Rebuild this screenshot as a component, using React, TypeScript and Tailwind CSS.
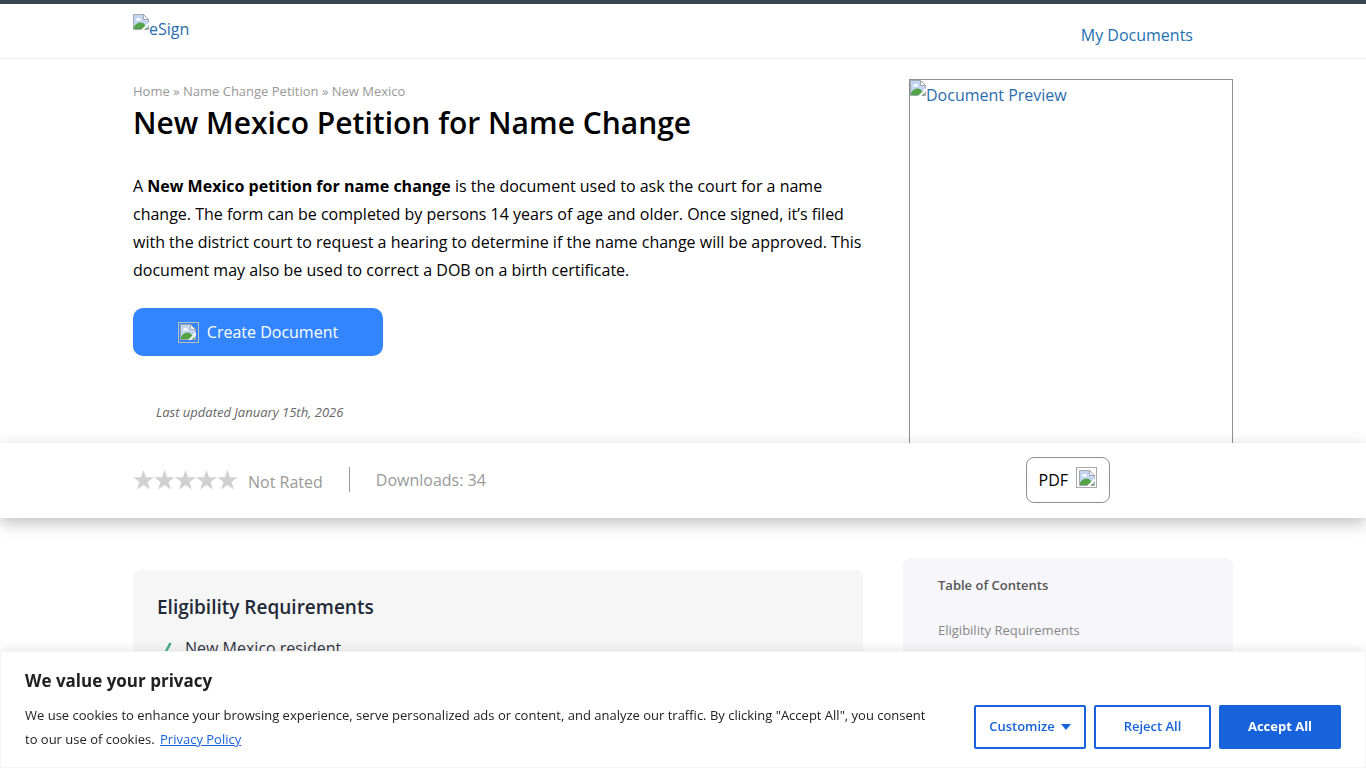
const ELIGIBILITY = ['New Mexico resident']

const CONTENTS = [{ label: 'Eligibility Requirements', href: '#eligibility' }]

const BREADCRUMBS = [
  { label: 'Home', href: '#home' },
  { label: 'Name Change Petition', href: '#name-change' },
]

function ImageIcon() {
  return (
    <svg viewBox="0 0 16 16" className="size-4 shrink-0" aria-hidden="true">
      <path d="M0.5 0.5H11L15.5 5V15.5H0.5Z" fill="#c3d5f1" />
      <path d="M3 6.5a1.2 1.2 0 0 1 1-1.8a1.8 1.8 0 0 1 3.2 0a1.2 1.2 0 0 1 .8 1.8Z" fill="#fff" />
      <path d="M1 15V12.5C3 10 5 8.5 7.5 8.5C9.5 8.5 11 9.5 12.5 11.5L15 15Z" fill="#55a347" />
      <path d="M10.5 0.5V5.5H15.5Z" fill="#fff" />
      <path d="M0.5 15.5V0.5H10.5L15.5 5.5V15.5Z" fill="none" stroke="#a0a7b0" />
      <path d="M10.5 0.5V5.5H15.5" fill="none" stroke="#a0a7b0" />
      <path d="M8 16L16 8V11L11 16Z" fill="#fff" />
    </svg>
  )
}

function FramedImageIcon({ className }: { className: string }) {
  return (
    <span className={`inline-flex size-[21px] shrink-0 items-center justify-center border ${className}`}>
      <ImageIcon />
    </span>
  )
}

function Header() {
  return (
    <header className="border-t-4 border-b border-t-[#36474f] border-b-[#ededed]">
      <div className="mx-auto flex h-[54px] max-w-[1100px] items-start justify-between pt-2.5">
        <a href="#home" className="flex text-[#2b6cb0]">
          <ImageIcon />
          <span className="leading-[30px]">eSign</span>
        </a>
        <a href="#documents" className="mr-10 leading-[42px] text-[#2271b1]">
          My Documents
        </a>
      </div>
    </header>
  )
}

function Hero() {
  return (
    <section className="mx-auto flex max-w-[1100px] justify-between gap-9 pt-5">
      <div className="min-w-0 flex-1 pb-[19px]">
        <nav aria-label="Breadcrumb" className="text-[13px] leading-6 text-[#999]">
          {BREADCRUMBS.map(crumb => (
            <span key={crumb.label}>
              <a href={crumb.href}>{crumb.label}</a> »{' '}
            </span>
          ))}
          <span>New Mexico</span>
        </nav>
        <h1 className="text-3xl leading-10 font-semibold">New Mexico Petition for Name Change</h1>
        <p className="mt-[29px] leading-7">
          A <strong>New Mexico petition for name change</strong> is the document used to ask the court for a name
          change. The form can be completed by persons 14 years of age and older. Once signed, it’s filed with the
          district court to request a hearing to determine if the name change will be approved. This document may
          also be used to correct a DOB on a birth certificate.
        </p>
        <button
          type="button"
          className="mt-6 flex h-12 w-[250px] items-center justify-center gap-2 rounded-[10px] bg-[#3385ff] text-white"
        >
          <FramedImageIcon className="border-[#c0c0c0]" />
          Create Document
        </button>
        <p className="mt-11 pl-[23px] text-[13px] leading-6 text-[#666] italic">Last updated January 15th, 2026</p>
      </div>
      <a
        href="#preview"
        className="flex w-[324px] shrink-0 border border-b-0 border-[#8f8f8f] text-[#2b6cb0]"
      >
        <ImageIcon />
        <span className="leading-[30px]">Document Preview</span>
      </a>
    </section>
  )
}

function DocumentBar() {
  return (
    <section className="relative bg-white shadow-[0_5px_15px_rgba(0,0,0,0.25)]">
      <div className="mx-auto flex h-[75px] max-w-[1100px] items-center pb-0.5 text-[#999]">
        <div className="flex" role="img" aria-label="Rating">
          {[1, 2, 3, 4, 5].map(n => (
            <svg key={n} viewBox="0 0 21 20" className="h-5 w-[21px]" aria-hidden="true">
              <path d="M10.5 0L13 7.3H20.7L14.6 11.9L16.9 19.4L10.5 15L4.1 19.4L6.4 11.9L0.3 7.3H8Z" fill="#d1d1d1" />
            </svg>
          ))}
        </div>
        <span className="ml-2.5 pt-1">Not Rated</span>
        <span className="mx-[26px] h-[25px] w-px bg-[#999]" />
        <span>Downloads: 34</span>
        <button
          type="button"
          className="mr-[123px] ml-auto flex h-[46px] items-center gap-2 rounded-lg border border-[#8f8f8f] px-3 text-black"
        >
          PDF
          <FramedImageIcon className="mb-1 border-[#a8a8a8]" />
        </button>
      </div>
    </section>
  )
}

function Body() {
  return (
    <main className="mx-auto flex max-w-[1100px] items-start gap-10 pt-10">
      <section id="eligibility" className="mt-3 min-w-0 flex-1 rounded-lg bg-[#f6f6f6] p-6 text-[#1f2937]">
        <h2 className="text-[19px] leading-[26px] font-semibold">Eligibility Requirements</h2>
        <ul className="mt-3.5">
          {ELIGIBILITY.map(item => (
            <li key={item} className="flex items-center gap-3 leading-7">
              <svg viewBox="0 0 16 16" className="size-4" fill="none" stroke="#38a879" strokeWidth="2.5" aria-hidden="true">
                <path d="M4 12L7 15L13.5 3" />
              </svg>
              {item}
            </li>
          ))}
        </ul>
      </section>
      <aside className="w-[330px] shrink-0 rounded-lg bg-[#f7f7fb] px-[35px] py-[15px] text-[13px]">
        <h2 className="leading-6 font-semibold text-[#555]">Table of Contents</h2>
        <ul className="mt-[21px]">
          {CONTENTS.map(item => (
            <li key={item.href} className="leading-6 text-[#888]">
              <a href={item.href}>{item.label}</a>
            </li>
          ))}
        </ul>
      </aside>
    </main>
  )
}

function CookieBanner() {
  return (
    <section
      aria-label="Cookie consent"
      className="fixed inset-x-0 bottom-0 border border-[#f4f4f4] bg-white px-6 pt-[15px] pb-4 text-[#212121] shadow-[0_-1px_10px_rgba(172,171,171,0.3)]"
    >
      <h2 className="text-[17px] leading-7 font-bold">We value your privacy</h2>
      <div className="mt-2 flex items-center justify-between">
        <p className="max-w-[910px] text-[13px] leading-6">
          We use cookies to enhance your browsing experience, serve personalized ads or content, and analyze our
          traffic. By clicking "Accept All", you consent to our use of cookies.{' '}
          <a href="#privacy" className="ml-0.5 text-[#1863dc] underline">
            Privacy Policy
          </a>
        </p>
        <div className="flex shrink-0 gap-2 text-[13px] font-semibold">
          <button
            type="button"
            className="flex h-11 w-28 items-center justify-center gap-1.5 rounded-xs border-2 border-[#1863dc] text-[#1863dc]"
          >
            Customize
            <span className="border-x-5 border-t-6 border-x-transparent border-t-[#1863dc]" />
          </button>
          <button type="button" className="h-11 w-[117px] rounded-xs border-2 border-[#1863dc] text-[#1863dc]">
            Reject All
          </button>
          <button type="button" className="h-11 w-[122px] rounded-xs bg-[#1863dc] font-bold text-white">
            Accept All
          </button>
        </div>
      </div>
    </section>
  )
}

export default function App() {
  return (
    <div className="bg-white font-['Open_Sans','Noto_Sans',sans-serif] text-base text-black">
      <Header />
      <Hero />
      <DocumentBar />
      <Body />
      <CookieBanner />
    </div>
  )
}
